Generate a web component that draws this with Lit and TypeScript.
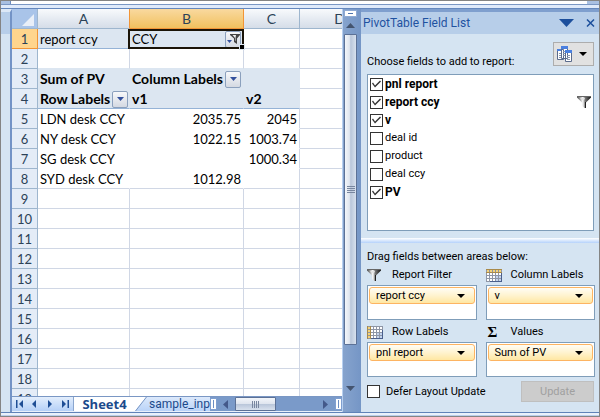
import { LitElement, html, css, svg, nothing } from "lit";
import { customElement, property } from "lit/decorators.js";
import { classMap } from "lit/directives/class-map.js";

const funnel = () => html`<svg class="funnel" width="14" height="12" viewBox="0 0 14 12" aria-hidden="true">
  <defs>
    <linearGradient id="metal" x1="0" x2="1" y1="0" y2="0">
      <stop offset="0" stop-color="#444" />
      <stop offset="0.2" stop-color="#999" />
      <stop offset="0.42" stop-color="#fff" />
      <stop offset="0.58" stop-color="#777" />
      <stop offset="1" stop-color="#111" />
    </linearGradient>
  </defs>
  <path d="M0 0H14V1.500L9 6.500V12H7.500L5 10V6.500L0 1.500Z" fill="url(#metal)" />
  <path d="M0 0H14V1H0Z" fill="#666" />
  <path d="M3 2H8L7 4H5Z" fill="#e4e4e4" />
  <path d="M8 6H9V12H8Z" fill="#222" />
</svg>`;

const tableIcon = (kind: "column" | "row") => html`<svg width="16" height="13" viewBox="0 0 16 13" aria-hidden="true">
  <rect width="16" height="13" fill="#8e96a6" />
  ${[0, 1, 2, 3, 4].map((c) =>
    [0, 1, 2, 3].map((r) => {
      const head = kind === "column" ? r === 0 : c === 0;
      return svg`<rect x=${c * 3 + 1} y=${r * 3 + 1} width="2" height="2" fill=${head ? "#f3d37a" : c > 2 && r > 1 ? "#c3d4ee" : "#ffffff"} />`;
    })
  )}
  <path d=${kind === "column" ? "M0 0H16V1H0ZM0 3H16V4H0Z" : "M0 0H1V13H0ZM3 0H4V13H3Z"} fill="#a98a4a" />
  <path d="M15 4H16V13H4V12H15Z" fill="#4a5f8c" />
</svg>`;

const sheetFont = css`"Lato", "Liberation Sans", sans-serif`;
const paneFont = css`"Roboto", "Liberation Sans", sans-serif`;

@customElement("sheet-grid")
export class SheetGrid extends LitElement {
  static styles = css`
    :host { display: block; overflow: hidden; min-height: 0; background: #fff; }
    table {
      width: max(100%, 368px);
      table-layout: fixed;
      border-collapse: separate;
      border-spacing: 0;
      font: 13px/18px ${sheetFont};
      color: #000;
    }
    .c-head { width: 26px; }
    .c-a { width: 92px; }
    .c-b { width: 114px; }
    .c-c { width: 56px; }
    th, td {
      box-sizing: border-box;
      height: 20px;
      padding: 1px 2px 0;
      border-right: 1px solid #d0d7e5;
      border-bottom: 1px solid #d0d7e5;
      white-space: nowrap;
      font-weight: 400;
      text-align: left;
    }
    thead th {
      text-align: center;
      font-size: 14px;
      color: #2c4257;
      background: linear-gradient(#f8fafc, #e6ebf2 50%, #d5dde8);
      border-color: #9eb6ce;
    }
    thead .corner { background: #a9c4e9; padding: 0; }
    .corner svg { display: block; margin: 3px 3px 0 auto; }
    thead .active { background: linear-gradient(#f9d99f, #f1c15f); border-color: #f29536; }
    thead .before { border-right-color: #f29536; }
    tbody th {
      text-align: center;
      color: #2c4257;
      background: #e4ecf7;
      border-color: #9eb6ce;
    }
    tbody .active { background: #ffd58d; border-color: #f29536; }
    .plain { border-color: #fff; }
    .plain.edge { border-right-color: #d0d7e5; }
    .plain.last { border-bottom-color: #d0d7e5; }
    .fill { background: #dce6f1; border-color: #dce6f1; }
    .rule { border-bottom-color: #95b3d7; }
    .into { border-bottom-color: #dce6f1; }
    .strong { font-size: 14px; font-weight: 700; }
    .num { text-align: right; }
    .cell { display: flex; align-items: center; gap: 2px; height: 18px; }
    .between { justify-content: space-between; }
    .picked { position: relative; }
    .picked::before {
      content: "";
      position: absolute;
      inset: 0 -1px -1px -2px;
      border: 2px solid #1a1408;
      pointer-events: none;
    }
    .picked::after {
      content: "";
      position: absolute;
      right: -2px;
      bottom: -2px;
      width: 4px;
      height: 4px;
      background: #000;
      border: 1px solid #dce6f1;
    }
    button {
      flex: none;
      display: grid;
      place-items: center;
      width: 16px;
      height: 17px;
      padding: 0;
      border: 1px solid #8ba0bd;
      border-radius: 2px;
      background: linear-gradient(#f7f8fa, #d4d9e2);
    }
  `;

  private drop(label: string, filtered = false) {
    return html`<button aria-label=${label}>
      ${filtered
        ? html`<svg width="13" height="12" viewBox="0 0 13 12"><path d="M0 7H5L2.500 10Z" fill="#33509c" /><path d="M3 1H13V2L10 5.500V11L7 9V5.500L3 2Z" fill="#444" /><path d="M5.500 2H9L8.500 5V8L8 7.500V5Z" fill="#eee" /></svg>`
        : html`<svg width="7" height="4" viewBox="0 0 7 4"><path d="M0 0H7L3.500 4Z" fill="#33509c" /></svg>`}
    </button>`;
  }

  render() {
    const data: [number, string, string, string][] = [
      [5, "LDN desk CCY", "2035.75", "2045"],
      [6, "NY desk CCY", "1022.15", "1003.74"],
      [7, "SG desk CCY", "", "1000.34"],
      [8, "SYD desk CCY", "1012.98", ""],
    ];
    const blank = Array.from({ length: 11 }, (_, i) => i + 9);
    return html`<table>
      <colgroup><col class="c-head" /><col class="c-a" /><col class="c-b" /><col class="c-c" /><col /></colgroup>
      <thead>
        <tr>
          <th class="corner" aria-label="Select all"><svg width="12" height="12" viewBox="0 0 12 12"><path d="M12 0V12H0Z" fill="#e9eff8" /></svg></th>
          <th class="before">A</th><th class="active">B</th><th>C</th><th>D</th>
        </tr>
      </thead>
      <tbody>
        <tr>
          <th class="active">1</th>
          <td class="fill rule">report ccy</td>
          <td class="fill picked"><div class="cell between">CCY ${this.drop("Filter report ccy", true)}</div></td>
          <td></td><td></td>
        </tr>
        <tr><th>2</th><td class="into"></td><td class="into"></td><td class="into"></td><td></td></tr>
        <tr>
          <th>3</th>
          <td class="fill strong">Sum of PV</td>
          <td class="fill strong"><div class="cell between">Column Labels ${this.drop("Column labels")}</div></td>
          <td class="fill"></td><td></td>
        </tr>
        <tr>
          <th>4</th>
          <td class="fill strong rule"><div class="cell between">Row Labels ${this.drop("Row labels")}</div></td>
          <td class="fill strong rule">v1</td><td class="fill strong rule">v2</td><td></td>
        </tr>
        ${data.map(([n, name, b, c]) => {
          const last = n === 8;
          return html`<tr>
            <th>${n}</th>
            <td class=${classMap({ plain: true, last })}>${name}</td>
            <td class=${classMap({ plain: true, last, num: true })}>${b}</td>
            <td class=${classMap({ plain: true, last, num: true, edge: true })}>${c}</td>
            <td></td>
          </tr>`;
        })}
        ${blank.map((n) => html`<tr><th>${n}</th><td></td><td></td><td></td><td></td></tr>`)}
      </tbody>
    </table>`;
  }
}

@customElement("sheet-tabs")
export class SheetTabs extends LitElement {
  static styles = css`
    :host {
      display: flex;
      box-sizing: border-box;
      height: 16px;
      border-top: 1px solid #7a97c4;
      border-bottom: 1px solid #e8f0fb;
      background: linear-gradient(#c4dafb, #a9c8f5);
    }
    button { padding: 0; border: 0; background: none; font: inherit; color: #1c4a8c; }
    svg { display: block; }
    .nav { flex: none; display: flex; width: 62px; box-sizing: border-box; border-right: 1px solid #8aa6cf; background: linear-gradient(#e3eefc, #b5d0f7); }
    .nav button { flex: 1; display: grid; place-items: center; }
    .tabs { flex: 1; display: flex; min-width: 0; overflow: hidden; }
    .sheet { flex: none; display: flex; }
    .current { width: 61px; background: #fff; justify-content: center; font: 700 13px/14px "Open Sans", sans-serif; }
    .other { font: 12px/14px ${paneFont}; background: linear-gradient(#dce9fb, #b9d3f8); }
    .scroll { flex: none; display: flex; width: 132px; background: #7a9ac9; }
    .split { width: 5px; margin: 1px 0; border: 1px solid #7f9fd0; background: #fff; }
    .split::before { content: ""; display: block; width: 1px; height: 8px; margin: 1px 2px; background: #6d8fc4; }
    .track { flex: 1; display: flex; align-items: center; justify-content: space-between; padding: 0 7px 0 6px; }
    .thumb {
      display: flex; align-items: center; justify-content: center; gap: 1px;
      box-sizing: border-box; width: 41px; height: 14px; margin-right: 40px;
      border: 1px solid #5c7196; border-radius: 1px;
      background: linear-gradient(#f3f6fa, #dfe5ef 48%, #b9c6da 52%, #d8e1ee);
    }
    .thumb i { width: 1px; height: 7px; background: #78869f; }
  `;

  render() {
    const marks: [string, string][] = [
      ["First sheet", "M0 0H1.500V8H0ZM7 0V8L3 4Z"],
      ["Previous sheet", "M5 0V8L1 4Z"],
      ["Next sheet", "M1 0V8L5 4Z"],
      ["Last sheet", "M0 0V8L4 4ZM5.500 0H7V8H5.500Z"],
    ];
    return html`
      <div class="nav">
        ${marks.map(([l, d]) => html`<button aria-label=${l}><svg width="7" height="8" viewBox="0 0 7 8"><path d=${d} fill="#1f4e95" /></svg></button>`)}
      </div>
      <div class="tabs">
        <button class="sheet current">Sheet4</button>
        <button class="sheet other">
          <svg width="14" height="14" viewBox="0 0 14 14"><path d="M0 0H11L0 14Z" fill="#fff" /><path d="M11.500 0L0.500 14" stroke="#7a97c4" /></svg>sample_inp
        </button>
      </div>
      <div class="scroll">
        <div class="split"></div>
        <div class="track">
          <svg width="5" height="9" viewBox="0 0 5 9"><path d="M5 0V9L0 4.500Z" fill="#44598a" /></svg>
          <div class="thumb"><i></i><i></i><i></i><i></i></div>
          <svg width="5" height="9" viewBox="0 0 5 9"><path d="M0 0V9L5 4.500Z" fill="#44598a" /></svg>
        </div>
        <div class="split"></div>
      </div>`;
  }
}

@customElement("sheet-scroll")
export class SheetScroll extends LitElement {
  static styles = css`
    :host {
      display: flex; flex-direction: column; align-items: stretch;
      box-sizing: border-box; width: 19px; padding: 1px 4px 0 1px;
      border-left: 1px solid #b8d0f0;
      background: linear-gradient(90deg, #86a3cd, #7596c6);
    }
    .split { box-sizing: border-box; height: 7px; padding: 2px 3px; border: 1px solid #8faad3; background: #fff; }
    .split::before { content: ""; display: block; height: 1px; background: #4f74ad; }
    .arrow { display: grid; place-items: center; height: 17px; }
    .thumb {
      flex: 1; display: flex; flex-direction: column; align-items: center; justify-content: center; gap: 1px;
      border: 1px solid #5c7196; border-radius: 1px;
      background: linear-gradient(90deg, #f3f6fa, #dfe5ef 40%, #b9c6da 52%, #d8e1ee);
    }
    .thumb i { width: 8px; height: 1px; background: #78869f; }
    .rest { height: 35px; }
    .foot { height: 15px; }
  `;

  render() {
    return html`
      <div class="split"></div>
      <div class="arrow"><svg width="9" height="5" viewBox="0 0 9 5"><path d="M4.500 0L9 5H0Z" fill="#44546f" /></svg></div>
      <div class="thumb"><i></i><i></i><i></i><i></i></div>
      <div class="rest"></div>
      <div class="arrow"><svg width="9" height="5" viewBox="0 0 9 5"><path d="M0 0H9L4.500 5Z" fill="#44546f" /></svg></div>
      <div class="foot"></div>`;
  }
}

@customElement("drop-area")
export class DropArea extends LitElement {
  @property() label = "";
  @property() field = "";
  @property() icon = "";

  static styles = css`
    :host { display: block; min-width: 0; font: 11px/16px ${paneFont}; color: #000; }
    .label { display: flex; align-items: center; height: 20px; }
    .icon { width: 25px; display: grid; justify-content: start; }
    .box { box-sizing: border-box; height: 35px; padding: 1px; border: 1px solid #7f9db9; background: #fff; }
    button {
      display: flex; align-items: center; justify-content: space-between;
      box-sizing: border-box; width: 100%; height: 17px; padding: 0 9px 0 6px;
      border: 1px solid #fdb462; border-radius: 3px;
      background: linear-gradient(#fffdf5, #fff3cf 50%, #ffe7a2);
      font: inherit; color: #000;
    }
    .sum { font: 700 15px/16px "Liberation Serif", serif; padding-left: 2px; }
  `;

  render() {
    return html`
      <div class="label">
        <span class="icon">${this.icon === "funnel"
          ? funnel()
          : this.icon === "sum"
            ? html`<span class="sum">Σ</span>`
            : tableIcon(this.icon as "column" | "row")}</span>
        ${this.label}
      </div>
      <div class="box"><button>${this.field}<svg width="8" height="4" viewBox="0 0 8 4"><path d="M0 0H8L4 4Z" /></svg></button></div>`;
  }
}

@customElement("field-pane")
export class FieldPane extends LitElement {
  static styles = css`
    :host { display: flex; flex-direction: column; background: #d5e4f2; font: 11px/16px ${paneFont}; color: #000; }
    header { display: flex; align-items: center; gap: 12px; height: 22px; padding: 0 4px 0 2px; background: #b7cee9; color: #1f52a0; }
    h2 { flex: 1; margin: 0; font: 12px/20px ${paneFont}; }
    header button { display: grid; padding: 0; border: 0; background: none; }
    .top { flex: 1; display: flex; flex-direction: column; padding: 8px 5px 7px 6px; }
    .choose { display: flex; align-items: center; justify-content: space-between; height: 24px; margin-bottom: 8px; }
    .choose span { padding-top: 16px; }
    .layout { display: flex; align-items: center; justify-content: space-between; box-sizing: border-box; width: 41px; height: 24px; padding: 0 6px 0 3px; border: 1px solid #adadad; background: #e1e1e1; }
    ul { flex: 1; margin: 0; padding: 0 2px; list-style: none; border: 1px solid #7f9db9; background: #fff; }
    li { display: flex; align-items: center; justify-content: space-between; height: 18px; }
    label { display: flex; align-items: center; gap: 2px; }
    .on { font-size: 12px; font-weight: 700; }
    input { appearance: none; box-sizing: border-box; width: 13px; height: 13px; margin: 0; border: 1px solid #333; background: #fff; }
    input:checked::before {
      content: ""; display: block; width: 11px; height: 11px; background: #333;
      clip-path: polygon(1px 5px, 2px 4px, 4px 7px, 9px 2px, 10px 3px, 4px 9px);
    }
    .divider { height: 5px; background: linear-gradient(#fff, #b5d2fb); }
    .bottom { padding: 6px 4px 10px 6px; }
    .areas { display: grid; grid-template-columns: 1fr 1fr; gap: 2px 9px; }
    .foot { display: flex; align-items: center; justify-content: space-between; padding: 4px 1px 0 0; }
    .foot label { gap: 6px; }
    .update { width: 73px; height: 21px; padding: 0; border: 1px solid #bfbfbf; background: #ccc; color: #a0a0a0; font: inherit; }
  `;

  render() {
    const fields: [string, boolean, boolean][] = [
      ["pnl report", true, false],
      ["report ccy", true, true],
      ["v", true, false],
      ["deal id", false, false],
      ["product", false, false],
      ["deal ccy", false, false],
      ["PV", true, false],
    ];
    return html`
      <header>
        <h2>PivotTable Field List</h2>
        <button aria-label="Pane options"><svg width="15" height="8" viewBox="0 0 15 8"><path d="M0 0H15L7.500 8Z" fill="#1c4f9c" /></svg></button>
        <button aria-label="Close"><svg width="9" height="8" viewBox="0 0 9 8"><path d="M1 0.500L8 7.500M8 0.500L1 7.500" stroke="#1c4f9c" stroke-width="1.500" /></svg></button>
      </header>
      <div class="top">
        <div class="choose">
          <span>Choose fields to add to report:</span>
          <button class="layout" aria-label="Field list layout">
            <svg width="16" height="17" viewBox="0 0 16 17">
              <path d="M0.500 3.500H6.500V13.500H0.500ZM4.500 0.500H10.500V12.500H4.500ZM8.500 4.500H14.500V15.500H8.500Z" fill="#fff" stroke="#5a6b8c" />
              <path d="M0 3H4V5H0ZM4 0H11V3H4ZM8 4H15V7H8Z" fill="#4a80e0" />
              <path d="M2 7.500H4M2 9.500H4M2 11.500H4M6 5.500H8M6 7.500H8M6 9.500H8M10 9.500H13M10 11.500H13M10 13.500H13" stroke="#8a97ae" />
            </svg>
            <svg width="8" height="4" viewBox="0 0 8 4"><path d="M0 0H8L4 4Z" /></svg>
          </button>
        </div>
        <ul>
          ${fields.map(([name, on, filtered]) => html`<li>
            <label class=${classMap({ on })}><input type="checkbox" .checked=${on} />${name}</label>
            ${filtered ? funnel() : nothing}
          </li>`)}
        </ul>
      </div>
      <div class="divider"></div>
      <div class="bottom">
        <div>Drag fields between areas below:</div>
        <div class="areas">
          <drop-area label="Report Filter" field="report ccy" icon="funnel"></drop-area>
          <drop-area label="Column Labels" field="v" icon="column"></drop-area>
          <drop-area label="Row Labels" field="pnl report" icon="row"></drop-area>
          <drop-area label="Values" field="Sum of PV" icon="sum"></drop-area>
        </div>
        <div class="foot">
          <label><input type="checkbox" />Defer Layout Update</label>
          <button class="update" disabled>Update</button>
        </div>
      </div>`;
  }
}

@customElement("app-root")
export class AppRoot extends LitElement {
  static styles = css`
    :host {
      display: flex; flex-direction: column; box-sizing: border-box;
      height: 100vh; overflow: hidden;
      border: 1px solid #848484; background: #d5e4f2;
    }
    .ribbon { height: 3px; background: linear-gradient(90deg, #a9c0e2 9px, #6d8dbd 9px 10px, #fff 10px calc(100% - 12px), #a9c0e2 0); border-bottom: 1px solid #7a97c4; }
    .band { height: 3px; background: #dfeafa; border-bottom: 1px solid #6487bd; }
    .main { flex: 1; display: flex; min-height: 0; }
    .side { width: 9px; border-right: 2px solid #7393c6; border-top: 3px solid #dce8f6; background: linear-gradient(#b7cee9 22px, #d5e4f2 22px); }
    .book { flex: 1; display: flex; flex-direction: column; min-width: 0; }
    sheet-grid { flex: 1; }
    sheet-scroll { flex: none; }
    .pane { flex: 0 1 238px; display: flex; border-top: 3px solid #7f9fce; }
    field-pane { flex: 1; }
    .status { height: 3px; border-top: 1px solid #5f82b8; background: linear-gradient(#e9f1fb 2px, #b9cdea 2px); }
  `;

  render() {
    return html`
      <div class="ribbon"></div>
      <div class="band"></div>
      <div class="main">
        <div class="side"></div>
        <div class="book">
          <sheet-grid></sheet-grid>
          <sheet-tabs></sheet-tabs>
        </div>
        <sheet-scroll></sheet-scroll>
        <div class="pane"><field-pane></field-pane></div>
      </div>
      <div class="status"></div>`;
  }
}
